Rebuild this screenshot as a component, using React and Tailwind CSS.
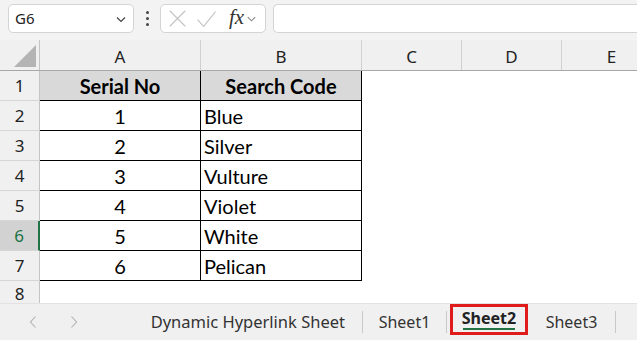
import React from 'react';

const data = [
    [1, 'Blue'],
    [2, 'Silver'],
    [3, 'Vulture'],
    [4, 'Violet'],
    [5, 'White'],
    [6, 'Pelican'],
];

const ui = { fontFamily: '"Noto Sans", "Open Sans", sans-serif' };
const cell = { fontFamily: 'Lato, "Open Sans", sans-serif' };

const Chevron = ({ className }) => (
    <svg viewBox="0 0 12 12" className={className} fill="none" stroke="currentColor" strokeWidth="1.2">
        <path d="M2 4.5 L6 8.5 L10 4.5" />
    </svg>
);

const RowHeader = ({ n, active }) => (
    <div
        className={`w-[40px] shrink-0 flex items-center justify-center text-[17px] border-b border-[#d6d6d6] ${active ? 'bg-[#d2d2d2] text-[#217346] border-r-2 border-r-[#217346]' : 'bg-[#f0f0f0] text-[#222] border-r border-r-[#c4c4c4]'}`}
        style={ui}
    >
        {n}
    </div>
);

const App = () => {
    return (
        <div className="w-[637px] h-[340px] overflow-hidden bg-white flex flex-col">
            {/* formula bar */}
            <div className="h-[40px] shrink-0 bg-[#f3f3f3] flex items-start pt-[4px] pl-[8px] gap-0">
                <div className="w-[126px] h-[29px] bg-white border border-[#d4d4d4] rounded-[5px] flex items-center justify-between pl-[6px] pr-[6px] text-[15px] text-[#222]" style={ui}>
                    <span>G6</span>
                    <Chevron className="w-[12px] h-[12px] text-[#444]" />
                </div>
                <div className="w-[26px] h-[29px] flex flex-col items-center justify-center gap-[3px]">
                    <span className="w-[3px] h-[3px] bg-[#444] rounded-full"></span>
                    <span className="w-[3px] h-[3px] bg-[#444] rounded-full"></span>
                    <span className="w-[3px] h-[3px] bg-[#444] rounded-full"></span>
                </div>
                <div className="w-[106px] h-[29px] bg-white border border-[#d4d4d4] rounded-[5px] flex items-center pl-[7px] gap-[9px]">
                    <svg viewBox="0 0 16 16" className="w-[19px] h-[19px]" fill="none" stroke="#c4c4c4" strokeWidth="1">
                        <path d="M1.5 1.5 L14.5 14.5 M14.5 1.5 L1.5 14.5" />
                    </svg>
                    <svg viewBox="0 0 18 16" className="w-[21px] h-[18px]" fill="none" stroke="#c4c4c4" strokeWidth="1">
                        <path d="M1 8.5 L6.5 14.5 L17 1.5" />
                    </svg>
                    <div className="flex items-center gap-[2px] ml-[3px]">
                        <span className="text-[21px] italic text-[#333] leading-none -mt-[2px]" style={{ fontFamily: '"Liberation Serif", serif' }}>fx</span>
                        <Chevron className="w-[11px] h-[11px] text-[#888]" />
                    </div>
                </div>
                <div className="ml-[7px] flex-1 h-[29px] bg-white border border-[#d4d4d4] border-r-0 rounded-l-[5px]"></div>
            </div>

            {/* column headers */}
            <div className="h-[31px] shrink-0 flex bg-[#f0f0f0] border-b border-[#a8a8a8]" style={ui}>
                <div className="w-[40px] shrink-0 border-r border-[#c4c4c4] flex items-end justify-end pr-[3px] pb-[3px]">
                    <svg viewBox="0 0 22 22" className="w-[22px] h-[22px]">
                        <path d="M22 0 L22 22 L0 22 Z" fill="#b4b4b4" />
                    </svg>
                </div>
                {['A', 'B', 'C', 'D', 'E'].map((c, i) => (
                    <div
                        key={c}
                        className={`shrink-0 flex items-center justify-center text-[17px] text-[#222] pt-[4px] border-r border-[#d0d0d0] ${i < 2 ? 'w-[161px]' : 'w-[100px]'}`}
                    >
                        {c}
                    </div>
                ))}
            </div>

            {/* row 1 */}
            <div className="h-[30px] shrink-0 flex" style={cell}>
                <RowHeader n={1} />
                <div className="w-[161px] shrink-0 bg-[#d9d9d9] border-r border-b border-black flex items-center justify-center pt-[1px] text-[20px] font-bold text-black">Serial No</div>
                <div className="w-[161px] shrink-0 bg-[#d9d9d9] border-r border-b border-black flex items-center justify-center pt-[1px] text-[20px] font-bold text-black">Search Code</div>
                <div className="flex-1"></div>
            </div>

            {data.map(([n, name], i) => (
                <div key={n} className="h-[30px] shrink-0 flex" style={cell}>
                    <RowHeader n={i + 2} active={i + 2 === 6} />
                    <div className="w-[161px] shrink-0 border-r border-b border-black flex items-center justify-center pt-[1px] text-[20px] text-black">{n}</div>
                    <div className="w-[161px] shrink-0 border-r border-b border-black flex items-center pl-[3px] pt-[1px] text-[20px] text-black">{name}</div>
                    <div className="flex-1"></div>
                </div>
            ))}

            {/* row 8 partial */}
            <div className="h-[22px] shrink-0 flex overflow-hidden">
                <div className="w-[40px] shrink-0 bg-[#f0f0f0] border-r border-[#c4c4c4] flex justify-center pt-[4px] text-[17px] text-[#222] leading-none" style={ui}>8</div>
            </div>

            {/* sheet tabs */}
            <div className="flex-1 bg-[#f0f0f0] border-t border-[#e2e2e2] flex items-center text-[16px] text-[#333]" style={ui}>
                <div className="w-[120px] shrink-0 flex items-center pl-[28px] gap-[31px] text-[#b0b0b0]">
                    <svg viewBox="0 0 10 14" className="w-[10px] h-[14px]" fill="none" stroke="currentColor" strokeWidth="1.1"><path d="M7.5 1.5 L2.5 7 L7.5 12.5" /></svg>
                    <svg viewBox="0 0 10 14" className="w-[10px] h-[14px]" fill="none" stroke="currentColor" strokeWidth="1.1"><path d="M2.5 1.5 L7.5 7 L2.5 12.5" /></svg>
                </div>
                <div className="w-[243px] shrink-0 flex items-center justify-end pr-[17px] h-[22px] border-r border-[#c8c8c8] text-[16.5px]">Dynamic Hyperlink Sheet</div>
                <div className="w-[84px] shrink-0 flex items-center justify-center h-[22px] border-r border-[#c8c8c8]">Sheet1</div>
                <div className="w-[78px] shrink-0 h-[31px] -mt-[5px] ml-[3px] border-[3px] border-[#e01b1b] flex flex-col items-center justify-center relative">
                    <span className="font-bold text-[#222] leading-none -mt-[4px]">Sheet2</span>
                    <span className="absolute bottom-[2px] left-[10px] right-[10px] h-[2px] bg-[#217346]"></span>
                </div>
                <div className="w-[88px] shrink-0 flex items-center justify-center h-[22px] border-r border-[#c8c8c8] ml-[0px]">Sheet3</div>
            </div>
        </div>
    );
};

export default App;
